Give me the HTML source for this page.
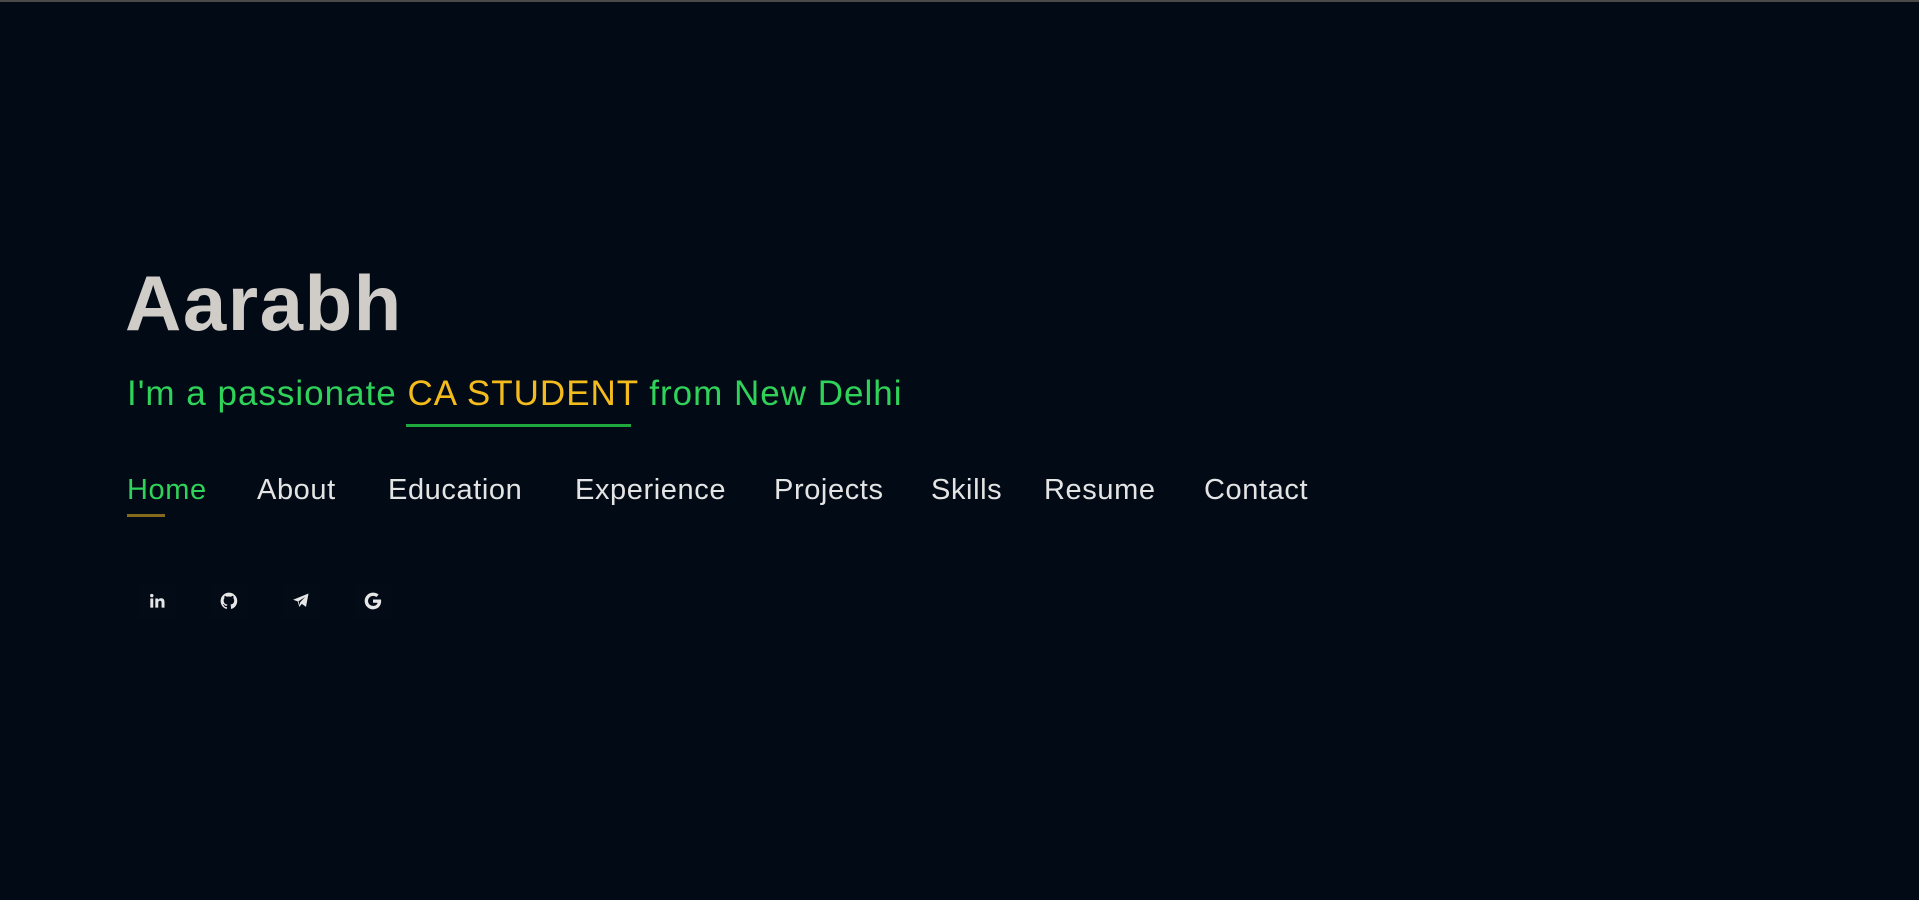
<!DOCTYPE html>
<html><head><meta charset="utf-8"><style>
html,body{margin:0;padding:0;width:1919px;height:900px;background:#020a15;overflow:hidden;font-family:"Liberation Sans",sans-serif}
.top{position:absolute;left:0;top:0;width:1919px;height:2px;background:#4a4a4a}
h1{position:absolute;left:125px;top:264px;margin:0;font-size:78px;font-weight:700;color:#d0ccc8;line-height:1;letter-spacing:1.5px}
.sub{position:absolute;left:127px;top:376px;font-size:35px;color:#2fd35a;white-space:nowrap;line-height:1;letter-spacing:1px}
.sub span{color:#f4bb1c}
.ul{position:absolute;left:406px;top:424px;width:225px;height:3px;background:#1fa83c}
.nav a{position:absolute;top:476px;font-size:29px;color:#e4e4e4;text-decoration:none;line-height:1;letter-spacing:0.6px}
.nav a.act{color:#2fd35a}
.hu{position:absolute;left:127px;top:514px;width:38px;height:3px;background:#85691c}
.ic{position:absolute;top:583px;width:36px;height:36px;background:#030b17;display:flex;align-items:center;justify-content:center}
.ic svg{width:20px;height:20px;fill:#e6e6e6}
</style></head><body>
<div class="top"></div>
<h1>Aarabh</h1>
<div class="sub">I'm a passionate <span>CA STUDENT</span> from New Delhi</div>
<div class="ul"></div>
<div class="nav">
<a class="act" style="left:127px">Home</a>
<a style="left:257px">About</a>
<a style="left:388px">Education</a>
<a style="left:575px">Experience</a>
<a style="left:774px">Projects</a>
<a style="left:931px">Skills</a>
<a style="left:1044px">Resume</a>
<a style="left:1204px">Contact</a>
</div>
<div class="hu"></div>
<div class="ic" style="left:139px"><svg viewBox="0 0 24 24"><rect x="4" y="9" width="3.5" height="11"/><circle cx="5.75" cy="5.5" r="2"/><path d="M10 9h3.3v1.6c.6-1 1.8-1.9 3.7-1.9 3 0 4 1.9 4 4.9V20h-3.5v-5.7c0-1.5-.4-2.6-1.9-2.6s-2.1 1.1-2.1 2.6V20H10z"/></svg></div>
<div class="ic" style="left:211px"><svg viewBox="0 0 24 24"><path d="M12 2a10 10 0 0 0-3.2 19.5c.5.1.7-.2.7-.5v-1.8c-2.8.6-3.4-1.3-3.4-1.3-.5-1.2-1.1-1.5-1.1-1.5-.9-.6.1-.6.1-.6 1 .1 1.5 1 1.5 1 .9 1.5 2.4 1.1 3 .8.1-.6.3-1.1.6-1.3-2.2-.3-4.6-1.1-4.6-5 0-1.1.4-2 1-2.7-.1-.3-.4-1.3.1-2.7 0 0 .8-.3 2.7 1a9.4 9.4 0 0 1 5 0c1.9-1.3 2.7-1 2.7-1 .5 1.4.2 2.4.1 2.7.6.7 1 1.6 1 2.7 0 3.9-2.4 4.7-4.6 5 .4.3.7.9.7 1.9V21c0 .3.2.6.7.5A10 10 0 0 0 12 2z"/></svg></div>
<div class="ic" style="left:283px"><svg viewBox="0 0 24 24"><path d="M21 3 2.5 10.5l5.5 2 2 6.5 3-3.5 5 3.5z M9 12.5l8-5.5-6 6.5-.5 3.5z"/></svg></div>
<div class="ic" style="left:355px"><svg viewBox="0 0 24 24"><path d="M21.6 10.2H12v3.9h5.5c-.5 2.4-2.6 3.8-5.5 3.8a6 6 0 0 1 0-12c1.5 0 2.8.5 3.9 1.4l2.9-2.9A10 10 0 0 0 12 2a10 10 0 1 0 0 20c5.8 0 9.8-4.1 9.8-9.8 0-.7-.1-1.4-.2-2z"/></svg></div>
</body></html>
